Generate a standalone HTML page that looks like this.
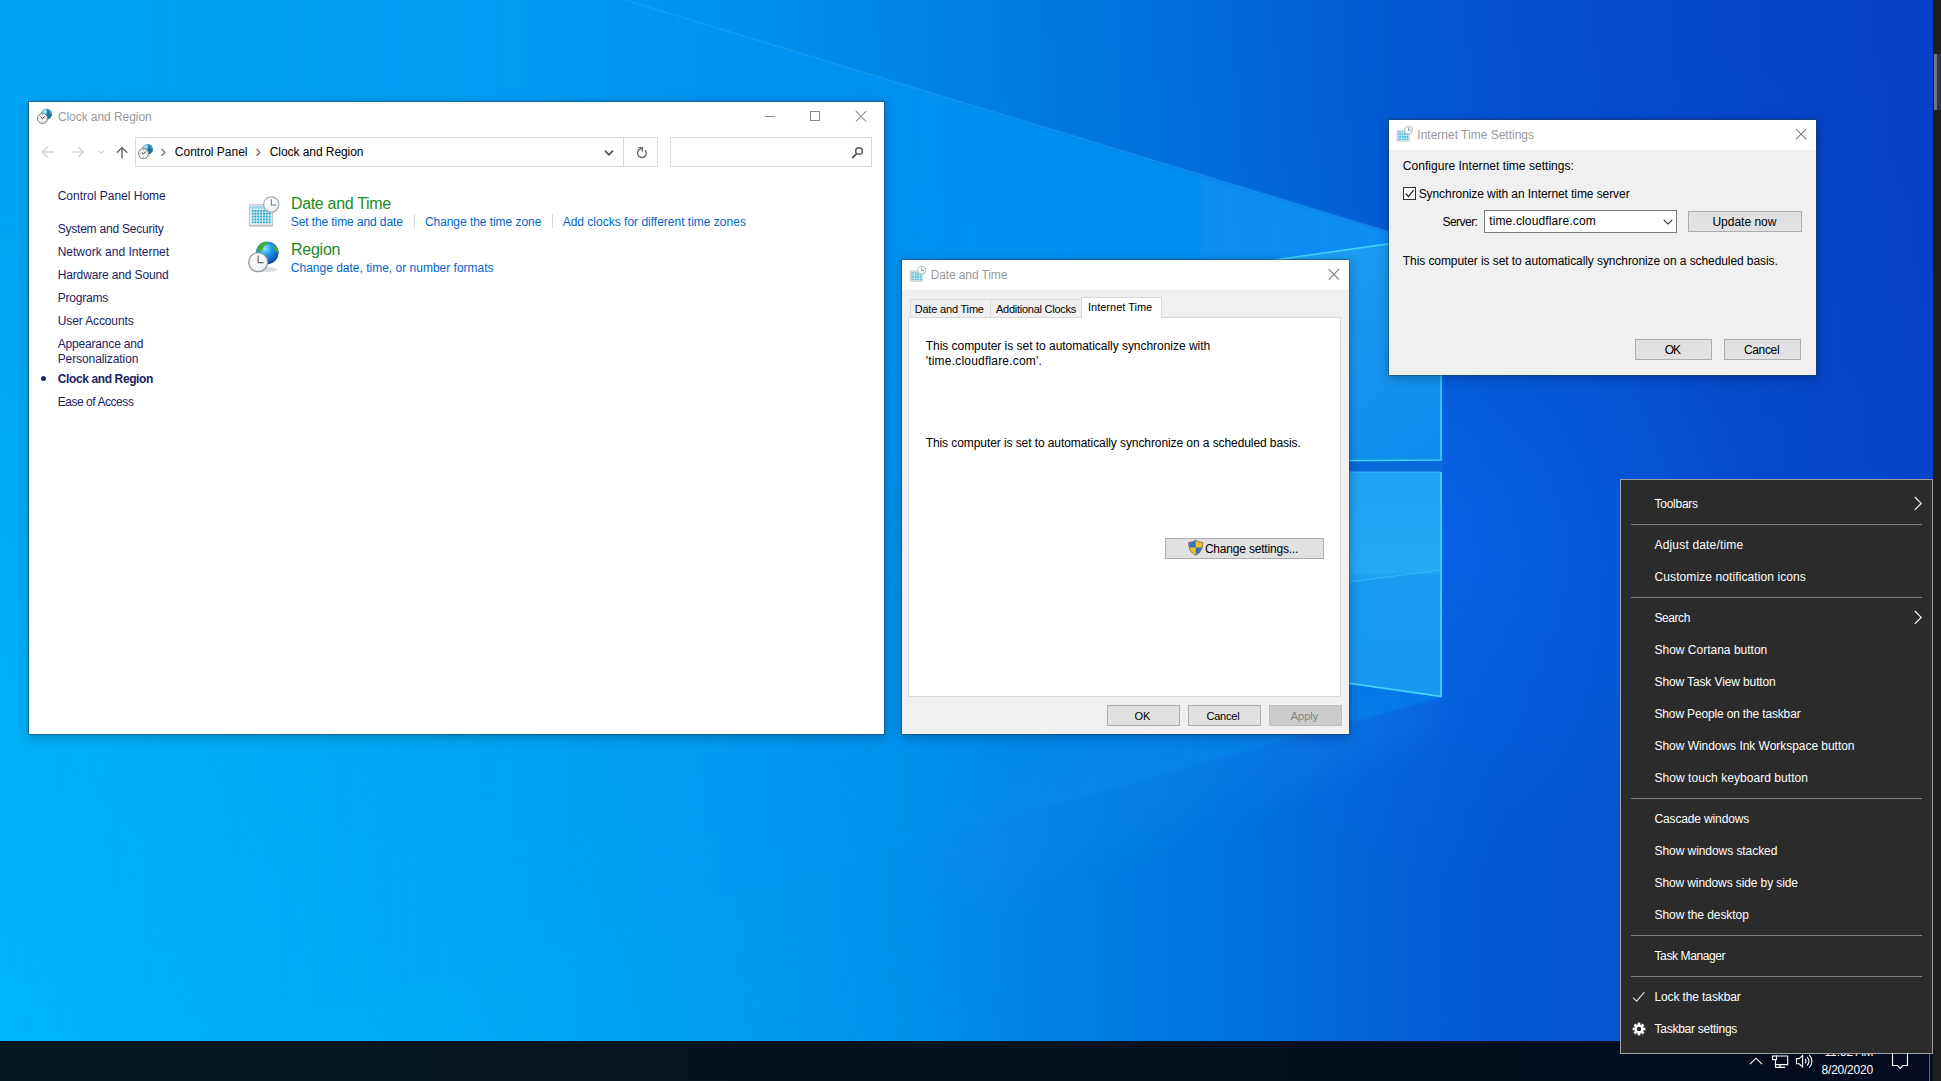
<!DOCTYPE html>
<html><head><meta charset="utf-8"><title>Desktop</title>
<style>
html,body{margin:0;padding:0;width:1941px;height:1081px;overflow:hidden;background:#0a58c8;font-family:"Liberation Sans",sans-serif;}
*{box-sizing:border-box}
.abs{position:absolute}
#txt .t{position:absolute;white-space:nowrap;font-family:"Liberation Sans",sans-serif;}
.win{position:absolute;background:#fff;box-shadow:0 0 0 1px rgba(40,60,80,.45),0 3px 11px 1px rgba(0,0,0,.22),0 0 4px rgba(0,0,0,.10);}
.dlg{background:#f0f0f0}
.btn{position:absolute;background:#e1e1e1;border:1px solid #adadad;}
.btn.dis{background:#cccccc;border-color:#bfbfbf}
.box{position:absolute;background:#fff;border:1px solid #d9d9d9}
.sep{position:absolute;height:1px;background:#808080;left:1631px;width:291px}
svg{position:absolute;overflow:visible}

</style></head><body>
<svg id="wp" width="1941" height="1081" viewBox="0 0 1941 1081" style="position:absolute;left:0;top:0">
<defs>
<linearGradient id="bg" x1="0" y1="0" x2="1" y2="0">
 <stop offset="0" stop-color="#00a5f2"/>
 <stop offset="0.26" stop-color="#009df0"/>
 <stop offset="0.46" stop-color="#008de9"/>
 <stop offset="0.62" stop-color="#0075e1"/>
 <stop offset="0.77" stop-color="#0558d4"/>
 <stop offset="1" stop-color="#0645c8"/>
</linearGradient>
<linearGradient id="beam" gradientUnits="userSpaceOnUse" x1="0" y1="0" x2="1441" y2="0">
 <stop offset="0" stop-color="#0498f6" stop-opacity="0"/>
 <stop offset="0.42" stop-color="#0496f6" stop-opacity="0.25"/>
 <stop offset="0.62" stop-color="#0494f6" stop-opacity="0.75"/>
 <stop offset="1" stop-color="#0a92f6" stop-opacity="0.92"/>
</linearGradient>
<linearGradient id="beam2" gradientUnits="userSpaceOnUse" x1="0" y1="0" x2="1441" y2="0">
 <stop offset="0" stop-color="#0498f6" stop-opacity="0"/>
 <stop offset="0.45" stop-color="#0496f6" stop-opacity="0.15"/>
 <stop offset="1" stop-color="#0a8cf2" stop-opacity="0.5"/>
</linearGradient>
<linearGradient id="bl" x1="0" y1="0" x2="0" y2="1">
 <stop offset="0" stop-color="#00b8fa" stop-opacity="0"/>
 <stop offset="0.55" stop-color="#00b8fa" stop-opacity="0.6"/>
 <stop offset="1" stop-color="#00b8fa" stop-opacity="0.85"/>
</linearGradient>
<linearGradient id="blm" x1="0" y1="0" x2="1" y2="0">
 <stop offset="0" stop-color="#fff" stop-opacity="1"/>
 <stop offset="0.55" stop-color="#fff" stop-opacity="0"/>
</linearGradient>
<mask id="blmask"><rect width="1941" height="1081" fill="url(#blm)"/></mask>
<radialGradient id="tr" cx="1" cy="0" r="0.7">
 <stop offset="0" stop-color="#0434bc" stop-opacity="0.3"/>
 <stop offset="1" stop-color="#0430b8" stop-opacity="0"/>
</radialGradient>
<radialGradient id="glow" cx="1441" cy="540" r="330" gradientUnits="userSpaceOnUse">
 <stop offset="0" stop-color="#0a6cf4" stop-opacity="0.5"/>
 <stop offset="1" stop-color="#0a6cf4" stop-opacity="0"/>
</radialGradient>
<linearGradient id="pane1" x1="0" y1="0" x2="1" y2="1">
 <stop offset="0" stop-color="#22a6f4"/><stop offset="1" stop-color="#0f8aec"/>
</linearGradient>
<linearGradient id="pane2" x1="0" y1="0" x2="0" y2="1">
 <stop offset="0" stop-color="#1a9ef2"/><stop offset="0.45" stop-color="#1ea6f4"/><stop offset="0.46" stop-color="#189cf0"/><stop offset="1" stop-color="#1698ee"/>
</linearGradient>
<filter id="b2"><feGaussianBlur stdDeviation="1.5"/></filter>
<filter id="b20"><feGaussianBlur stdDeviation="20"/></filter>
</defs>
<rect width="1941" height="1081" fill="url(#bg)"/>
<rect width="1941" height="1081" fill="url(#tr)"/>
<rect width="1941" height="1081" fill="url(#glow)"/>
<rect y="200" width="1941" height="881" fill="url(#bl)" mask="url(#blmask)"/>
<polygon points="-50,-20 625,0 1441,248 1441,466 -50,520" fill="url(#beam)" filter="url(#b2)"/>
<polygon points="-50,520 1441,466 1441,697 408,985 -50,1120" fill="url(#beam2)" filter="url(#b2)"/>
<path d="M625,0 L1441,248" stroke="#3db4ff" stroke-opacity="0.3" stroke-width="1.5" fill="none"/>
<!-- floor reflection under logo -->
<polygon points="1100,735 1441,697 1441,720 1300,780 1000,900 900,860" fill="#1c8cf0" opacity="0.25" filter="url(#b20)"/>
<!-- logo panes -->
<polygon points="1180,461 1443,459 1443,473 1180,473" fill="#0868dc"/>
<polygon points="1180,273.3 1441,236.5 1441,460 1180,462" fill="url(#pane1)"/>
<polygon points="1180,472 1441,472 1441,696.5 1180,659" fill="url(#pane2)"/>
<polygon points="1180,472 1441,472 1441,570 1180,604" fill="#2aaef8" opacity="0.3"/>
<path d="M1180,604 L1441,570" stroke="#48c8fa" stroke-opacity="0.55" stroke-width="1.2" fill="none"/>
<polyline points="1180,273.3 1441,236.5 1441,460 1180,462" fill="none" stroke="#40d2f8" stroke-width="1.6"/>
<polyline points="1180,472 1441,472" fill="none" stroke="#40d2f8" stroke-width="1" stroke-opacity="0.6"/>
<polyline points="1441,472 1441,696.5 1180,659" fill="none" stroke="#40d2f8" stroke-width="1.8"/>
</svg>

<!-- right strip -->
<div class="abs" style="left:1933px;top:0;width:8px;height:1081px;background:#1e1e1e"></div>
<div class="abs" style="left:1934px;top:54px;width:7px;height:56px;background:#34344c"></div>
<div class="abs" style="left:1934px;top:54px;width:3px;height:56px;background:#77757c"></div>

<!-- taskbar -->
<div class="abs" style="left:0;top:1041px;width:1933px;height:40px;background:linear-gradient(90deg,#021823 0%,#03131f 50%,#050b20 100%)"></div>

<span class="abs" style="left:1824.4px;top:1044px;font-size:12px;line-height:16px;color:#fff;white-space:nowrap;letter-spacing:-0.1px">11:52 AM</span>
<!-- ============ Window 1 ============ -->
<div class="win" style="left:29px;top:102px;width:855px;height:632px"></div>
<div class="box" style="left:135px;top:137px;width:489px;height:30px"></div>
<div class="box" style="left:623px;top:137px;width:35px;height:30px"></div>
<div class="box" style="left:670px;top:137px;width:202px;height:30px"></div>
<div class="abs" style="left:414px;top:214px;width:1px;height:14px;background:#d6d6d6"></div>
<div class="abs" style="left:552px;top:214px;width:1px;height:14px;background:#d6d6d6"></div>
<div class="abs" style="left:41px;top:376px;width:5px;height:5px;border-radius:50%;background:#1e2a6a"></div>

<!-- ============ Window 2 ============ -->
<div class="win" style="left:902px;top:260px;width:447px;height:474px"></div>
<div class="abs dlg" style="left:902px;top:290px;width:447px;height:444px"></div>
<div class="box" style="left:908px;top:317px;width:433px;height:380px"></div>
<div class="abs" style="left:910px;top:299px;width:81px;height:19px;background:#f0f0f0;border:1px solid #d9d9d9;border-bottom:none"></div>
<div class="abs" style="left:991px;top:299px;width:91px;height:19px;background:#f0f0f0;border:1px solid #d9d9d9;border-bottom:none;border-left:none"></div>
<div class="abs" style="left:1081px;top:297px;width:81px;height:21px;background:#fff;border:1px solid #d9d9d9;border-bottom:none"></div>
<div class="abs" style="left:910px;top:317px;width:171px;height:1px;background:#d9d9d9"></div>
<div class="btn" style="left:1165px;top:538px;width:159px;height:21px"></div>
<div class="btn" style="left:1107px;top:705px;width:73px;height:21px"></div>
<div class="btn" style="left:1188px;top:705px;width:73px;height:21px"></div>
<div class="btn dis" style="left:1269px;top:705px;width:73px;height:21px"></div>

<!-- ============ Window 3 ============ -->
<div class="win" style="left:1389px;top:120px;width:427px;height:255px"></div>
<div class="abs dlg" style="left:1389px;top:150px;width:427px;height:225px"></div>
<div class="abs" style="left:1403px;top:187px;width:13px;height:13px;background:#fff;border:1px solid #333"></div>
<div class="abs" style="left:1484px;top:210px;width:193px;height:23px;background:#fff;border:1px solid #7a7a7a"></div>
<div class="btn" style="left:1688px;top:211px;width:114px;height:21px"></div>
<div class="btn" style="left:1635px;top:339px;width:77px;height:21px"></div>
<div class="btn" style="left:1724px;top:339px;width:77px;height:21px"></div>

<!-- ============ Context menu ============ -->
<div class="abs" style="left:1620px;top:479px;width:313px;height:575px;background:#2b2b2b;border:1px solid #a0a0a0"></div>
<div class="sep" style="top:524px"></div>
<div class="sep" style="top:597px"></div>
<div class="sep" style="top:798px"></div>
<div class="sep" style="top:935px"></div>
<div class="sep" style="top:976px"></div>
<!--ICONS_START--><svg width="1941" height="1081" viewBox="0 0 1941 1081" style="left:0;top:0">
<defs>
<radialGradient id="gl" cx="0.35" cy="0.3" r="0.8"><stop offset="0" stop-color="#bfe9f6"/><stop offset="0.45" stop-color="#58b4d8"/><stop offset="1" stop-color="#1b6a98"/></radialGradient>
<radialGradient id="gl2" cx="0.4" cy="0.3" r="0.75"><stop offset="0" stop-color="#8fe6ff"/><stop offset="0.4" stop-color="#1f9de8"/><stop offset="1" stop-color="#0a3aa0"/></radialGradient>
<radialGradient id="ck" cx="0.4" cy="0.35" r="0.8"><stop offset="0" stop-color="#ffffff"/><stop offset="0.7" stop-color="#eef1f4"/><stop offset="1" stop-color="#c8ced4"/></radialGradient>
<linearGradient id="cal" x1="0" y1="0" x2="0" y2="1"><stop offset="0" stop-color="#d8eef6"/><stop offset="1" stop-color="#ffffff"/></linearGradient>
<pattern id="grid" width="2.85" height="2.9" patternUnits="userSpaceOnUse" x="251.6" y="209.8"><rect width="2" height="2" fill="#1fa0ca"/></pattern>
<pattern id="gridS" width="2.45" height="2.5" patternUnits="userSpaceOnUse"><rect width="2.45" height="2.5" fill="#bfe4ee"/><rect width="1.5" height="1.5" fill="#3fb4d4"/></pattern>
<g id="glclk16">
  <circle cx="9.4" cy="5.4" r="5.5" fill="url(#gl)"/>
  <path d="M9.6,0.2 C10.4,2 10.2,4 9.2,5.6 C10.4,6.8 10.6,8.8 9.8,10.6 C12.8,10.4 15,8 14.9,5.2 C14.4,5.8 13.6,6 13,5.6 C13.2,3.6 12,1.2 9.600,0.2 Z" fill="#1f6f9f" opacity="0.9"/>
  <circle cx="5.5" cy="9.9" r="5" fill="url(#ck)" stroke="#7d7d7d" stroke-width="1"/>
  <path d="M3.7,8.5 L5.5,10.1 L7.8,7.900" fill="none" stroke="#222" stroke-width="1"/>
  <path d="M5.5,6 V6.8 M5.5,13 V13.8 M1.600,9.9 H2.4 M8.600,9.9 H9.4" stroke="#777" stroke-width="0.7"/>
</g>
<g id="calclk16">
  <rect x="0.2" y="4.6" width="12.4" height="10.6" fill="#dfe3e6" stroke="#b9bfc4" stroke-width="0.5"/>
  <rect x="0.9" y="5.6" width="11" height="8.6" fill="url(#gridS)"/>
  <circle cx="11.7" cy="4.2" r="4" fill="url(#ck)" stroke="#aab2b8" stroke-width="0.8"/>
  <path d="M11.7,1.6 V4.3 H14" fill="none" stroke="#6a7f90" stroke-width="0.8"/>
</g>
<g id="xbtn"><path d="M0,0 L10.4,10.4 M10.4,0 L0,10.4" stroke-width="1.05" fill="none"/></g>
</defs>

<!-- window 1 title icon + address icon -->
<use href="#glclk16" x="37" y="108.6"/>
<use href="#glclk16" x="138" y="143.8"/>
<!-- caption buttons win1 -->
<g stroke="#8a8a8a" fill="none" stroke-width="1">
 <path d="M765,116.5 H775"/>
 <rect x="810.5" y="111.5" width="9" height="9"/>
</g>
<use href="#xbtn" x="855.8" y="111.1" stroke="#8a8a8a"/>
<use href="#xbtn" x="1328.7" y="269.2" stroke="#777"/>
<use href="#xbtn" x="1795.9" y="129" stroke="#777"/>
<!-- nav arrows -->
<g fill="none" stroke="#d2d2d2" stroke-width="1.4">
 <path d="M54,152 H42.8 M47.8,146.8 L42.6,152 L47.8,157.2"/>
 <path d="M72,152 H83.2 M78.2,146.8 L83.4,152 L78.2,157.2"/>
 <path d="M98.4,150.6 L101.2,153.2 L104,150.6" stroke-width="1.1"/>
</g>
<path d="M122,158.6 V147.6 M116.8,152.8 L122,147.6 L127.2,152.8" fill="none" stroke="#6e6e6e" stroke-width="1.5"/>
<g fill="none" stroke="#6a6a6a" stroke-width="1.25">
 <path d="M161.6,149 L164.9,152.4 L161.6,155.8"/>
 <path d="M256.6,149 L259.9,152.4 L256.6,155.8"/>
</g>
<path d="M605,150.6 L609,154.8 L613,150.6" fill="none" stroke="#505050" stroke-width="1.7"/>
<!-- refresh -->
<g fill="none" stroke="#6a6a6a" stroke-width="1.4">
 <path d="M645.1,150.3 A4.3,4.3 0 1 1 639.1,149.9 L641.8,147.9"/>
 <path d="M638.2,147.6 H642.4 V151.7" stroke-width="1.3"/>
</g>
<!-- magnifier -->
<g fill="none" stroke="#5a5a5a">
 <circle cx="859" cy="151" r="3.3" stroke-width="1.5"/>
 <path d="M856.6,153.6 L852.2,158" stroke-width="1.9"/>
</g>

<!-- 32px Date and Time icon -->
<g>
 <rect x="249.3" y="204.8" width="23.4" height="20.8" fill="#e4e7ea" stroke="#aeb6bc" stroke-width="0.8"/>
 <rect x="250.6" y="206.2" width="20.8" height="17.8" fill="url(#cal)"/>
 <rect x="250.6" y="206.200" width="20.8" height="2.6" fill="#9fd6e8"/>
 <rect x="251.6" y="209.8" width="19.6" height="14" fill="url(#grid)"/>
 <rect x="249.6" y="225.6" width="23" height="1.2" fill="#c9ced2"/>
 <circle cx="271.3" cy="204.6" r="7.7" fill="url(#ck)" stroke="#a2abb3" stroke-width="1.2"/>
 <path d="M271.3,199.2 V205 H276.2" fill="none" stroke="#5c7488" stroke-width="1.1"/>
</g>
<!-- 32px Region icon -->
<g>
 <ellipse cx="266" cy="269.6" rx="11.5" ry="2.6" fill="#000" opacity="0.13"/>
 <circle cx="267.2" cy="252.8" r="11.4" fill="url(#gl2)"/>
 <path d="M258.8,245.7 C260.8,242.2 265.8,241.2 268.8,242.8 C267.8,245.2 263.3,245.6 262.8,248.8 C262.4,251.2 259.2,250.2 258,252.8 C256.8,250.2 257.2,247.6 258.8,245.700 Z" fill="#3fae3c"/>
 <path d="M273.4,245.6 C275.8,245.8 277.8,248.8 278.4,252 C276.8,253.2 274.4,251.2 273.8,248.8 Z" fill="#3fae3c"/>
 <circle cx="258.2" cy="262.2" r="9.5" fill="url(#ck)" stroke="#949ca4" stroke-width="1.3"/>
 <path d="M258.2,255.6 V262.6 H263.6" fill="none" stroke="#606870" stroke-width="1.2"/>
</g>

<!-- window 2 / 3 title icons -->
<use href="#calclk16" x="910" y="266.2"/>
<use href="#calclk16" x="1396.8" y="126"/>

<!-- shield -->
<g>
 <path d="M1195.7,540.2 C1193.4,541.6 1191.2,542.2 1188.7,542.3 C1188.5,548.3 1190.5,552.9 1195.7,555.2 C1200.9,552.9 1202.9,548.3 1202.7,542.3 C1200.2,542.2 1198,541.6 1195.7,540.2 Z" fill="#f5c01a" stroke="#555" stroke-width="0.7"/>
 <path d="M1195.7,540.6 C1193.6,541.9 1191.5,542.5 1189.1,542.6 C1189.05,544.4 1189.2,546.1 1189.6,547.6 H1195.7 Z" fill="#2f72c8"/>
 <path d="M1195.7,547.6 H1201.8 C1201,550.9 1199.2,553.3 1195.7,554.8 Z" fill="#2f72c8"/>
</g>

<!-- checkbox check -->
<path d="M1405.6,193.6 L1408.4,196.6 L1413.6,190.2" fill="none" stroke="#222" stroke-width="1.3"/>
<!-- combo chevron -->
<path d="M1663.8,220 L1668,224 L1672.2,220" fill="none" stroke="#444" stroke-width="1.1"/>

<!-- menu arrows -->
<g fill="none" stroke="#fff" stroke-width="1.1">
 <path d="M1914.8,497 L1921.2,503.400 L1914.8,509.8"/>
 <path d="M1914.8,611 L1921.2,617.400 L1914.8,623.8"/>
 <path d="M1633,997.6 L1636.6,1001.2 L1644.4,992.2" stroke="#e0e0e0"/>
</g>
<!-- gear -->
<g transform="translate(1639,1029)">
 <g fill="#fff">
  <rect x="-1.3" y="-6.4" width="2.6" height="12.8"/>
  <rect x="-1.3" y="-6.4" width="2.6" height="12.8" transform="rotate(45)"/>
  <rect x="-1.3" y="-6.4" width="2.6" height="12.8" transform="rotate(90)"/>
  <rect x="-1.3" y="-6.4" width="2.6" height="12.8" transform="rotate(135)"/>
  <circle r="4.6"/>
 </g>
 <circle r="2.2" fill="#2b2b2b"/>
</g>

<!-- tray -->
<g fill="none" stroke="#fff" stroke-width="1.1">
 <path d="M1750,1064.200 L1756,1058.2 L1762,1064.200"/>
 <!-- network -->
 <path d="M1775.5,1056 H1787.7 V1064.600 H1775.500 M1775.5,1059 V1067.6 M1775.5,1067.4 H1785 M1780,1064.600 V1067.4"/>
 <rect x="1772.5" y="1056" width="4" height="3.600" fill="#04121f"/>
 <!-- volume -->
 <path d="M1796.5,1058.6 H1799.2 L1802.6,1055.4 V1067 L1799.200,1063.800 H1796.5 Z"/>
 <path d="M1805,1059 A3,3 0 0 1 1805,1063.4"/>
 <path d="M1807,1056.8 A6,6 0 0 1 1807,1065.600"/>
 <path d="M1809.2,1054.8 A9,9 0 0 1 1809.200,1067.600"/>
 <!-- notification -->
 <path d="M1892.5,1053 V1065.500 H1897.5 L1900.200,1068.4 L1903,1065.500 H1907.500 V1053"/>
</g>
<rect x="1929" y="1054" width="1" height="27" fill="#5a6070"/>
</svg>
<!--ICONS_END-->

<div id="txt">
<span class="t" style="left:57.90px;top:108.50px;font-size:12px;line-height:17px;color:#999;letter-spacing:-0.060px;">Clock and Region</span>
<span class="t" style="left:174.80px;top:143.50px;font-size:12px;line-height:17px;color:#000;">Control Panel</span>
<span class="t" style="left:269.70px;top:143.50px;font-size:12px;line-height:17px;color:#000;letter-spacing:-0.060px;">Clock and Region</span>
<span class="t" style="left:57.70px;top:187.50px;font-size:12px;line-height:17px;color:#1b2262;">Control Panel Home</span>
<span class="t" style="left:57.70px;top:220.50px;font-size:12px;line-height:17px;color:#1b2262;letter-spacing:-0.215px;">System and Security</span>
<span class="t" style="left:57.70px;top:243.50px;font-size:12px;line-height:17px;color:#1b2262;">Network and Internet</span>
<span class="t" style="left:57.70px;top:266.50px;font-size:12px;line-height:17px;color:#1b2262;letter-spacing:-0.138px;">Hardware and Sound</span>
<span class="t" style="left:57.70px;top:289.50px;font-size:12px;line-height:17px;color:#1b2262;letter-spacing:-0.193px;">Programs</span>
<span class="t" style="left:57.70px;top:312.50px;font-size:12px;line-height:17px;color:#1b2262;letter-spacing:-0.113px;">User Accounts</span>
<span class="t" style="left:57.70px;top:335.50px;font-size:12px;line-height:17px;color:#1b2262;letter-spacing:-0.173px;">Appearance and</span>
<span class="t" style="left:57.70px;top:350.50px;font-size:12px;line-height:17px;color:#1b2262;letter-spacing:-0.096px;">Personalization</span>
<span class="t" style="left:57.70px;top:370.50px;font-size:12px;line-height:17px;color:#1b2262;font-weight:bold;letter-spacing:-0.378px;">Clock and Region</span>
<span class="t" style="left:57.70px;top:393.50px;font-size:12px;line-height:17px;color:#1b2262;letter-spacing:-0.450px;">Ease of Access</span>
<span class="t" style="left:290.90px;top:192.50px;font-size:16px;line-height:22px;color:#1e8a1e;letter-spacing:-0.307px;">Date and Time</span>
<span class="t" style="left:290.80px;top:213.50px;font-size:12px;line-height:17px;color:#0066cc;letter-spacing:-0.099px;">Set the time and date</span>
<span class="t" style="left:424.90px;top:213.50px;font-size:12px;line-height:17px;color:#0066cc;letter-spacing:-0.052px;">Change the time zone</span>
<span class="t" style="left:562.70px;top:213.50px;font-size:12px;line-height:17px;color:#0066cc;">Add clocks for different time zones</span>
<span class="t" style="left:290.90px;top:238.50px;font-size:16px;line-height:22px;color:#1e8a1e;letter-spacing:-0.216px;">Region</span>
<span class="t" style="left:290.80px;top:259.50px;font-size:12px;line-height:17px;color:#0066cc;">Change date, time, or number formats</span>
<span class="t" style="left:930.70px;top:266.50px;font-size:12px;line-height:17px;color:#999;letter-spacing:-0.113px;">Date and Time</span>
<span class="t" style="left:914.70px;top:301.50px;font-size:11px;line-height:15px;color:#000;letter-spacing:-0.188px;">Date and Time</span>
<span class="t" style="left:996.00px;top:301.50px;font-size:11px;line-height:15px;color:#000;letter-spacing:-0.253px;">Additional Clocks</span>
<span class="t" style="left:1088.00px;top:299.50px;font-size:11px;line-height:15px;color:#000;">Internet Time</span>
<span class="t" style="left:925.70px;top:337.50px;font-size:12px;line-height:17px;color:#000;letter-spacing:-0.031px;">This computer is set to automatically synchronize with</span>
<span class="t" style="left:925.70px;top:352.50px;font-size:12px;line-height:17px;color:#000;letter-spacing:0.201px;">'time.cloudflare.com'.</span>
<span class="t" style="left:925.70px;top:434.50px;font-size:12px;line-height:17px;color:#000;letter-spacing:-0.082px;">This computer is set to automatically synchronize on a scheduled basis.</span>
<span class="t" style="left:1204.90px;top:540.80px;font-size:12px;line-height:17px;color:#000;letter-spacing:-0.191px;">Change settings...</span>
<span class="t" style="left:1134.40px;top:708.50px;font-size:11px;line-height:15px;color:#000;">OK</span>
<span class="t" style="left:1206.40px;top:708.50px;font-size:11px;line-height:15px;color:#000;letter-spacing:-0.180px;">Cancel</span>
<span class="t" style="left:1290.70px;top:708.50px;font-size:11px;line-height:15px;color:#838383;">Apply</span>
<span class="t" style="left:1417.30px;top:126.50px;font-size:12px;line-height:17px;color:#999;">Internet Time Settings</span>
<span class="t" style="left:1402.80px;top:157.50px;font-size:12px;line-height:17px;color:#000;letter-spacing:0.031px;">Configure Internet time settings:</span>
<span class="t" style="left:1418.70px;top:185.50px;font-size:12px;line-height:17px;color:#000;letter-spacing:-0.081px;">Synchronize with an Internet time server</span>
<span class="t" style="left:1442.50px;top:213.50px;font-size:12px;line-height:17px;color:#000;letter-spacing:-0.540px;">Server:</span>
<span class="t" style="left:1489.20px;top:212.50px;font-size:12px;line-height:17px;color:#000;letter-spacing:0.140px;">time.cloudflare.com</span>
<span class="t" style="left:1712.40px;top:213.50px;font-size:12px;line-height:17px;color:#000;">Update now</span>
<span class="t" style="left:1402.80px;top:252.50px;font-size:12px;line-height:17px;color:#000;letter-spacing:-0.084px;">This computer is set to automatically synchronize on a scheduled basis.</span>
<span class="t" style="left:1664.70px;top:341.50px;font-size:12px;line-height:17px;color:#000;letter-spacing:-1.000px;">OK</span>
<span class="t" style="left:1744.00px;top:341.50px;font-size:12px;line-height:17px;color:#000;letter-spacing:-0.360px;">Cancel</span>
<span class="t" style="left:1654.50px;top:495.50px;font-size:12px;line-height:17px;color:#fff;letter-spacing:-0.257px;">Toolbars</span>
<span class="t" style="left:1654.50px;top:536.50px;font-size:12px;line-height:17px;color:#fff;letter-spacing:0.174px;">Adjust date/time</span>
<span class="t" style="left:1654.50px;top:568.50px;font-size:12px;line-height:17px;color:#fff;letter-spacing:0.097px;">Customize notification icons</span>
<span class="t" style="left:1654.50px;top:609.50px;font-size:12px;line-height:17px;color:#fff;letter-spacing:-0.432px;">Search</span>
<span class="t" style="left:1654.50px;top:641.50px;font-size:12px;line-height:17px;color:#fff;">Show Cortana button</span>
<span class="t" style="left:1654.50px;top:673.50px;font-size:12px;line-height:17px;color:#fff;letter-spacing:-0.117px;">Show Task View button</span>
<span class="t" style="left:1654.50px;top:705.50px;font-size:12px;line-height:17px;color:#fff;letter-spacing:-0.158px;">Show People on the taskbar</span>
<span class="t" style="left:1654.50px;top:737.50px;font-size:12px;line-height:17px;color:#fff;letter-spacing:-0.037px;">Show Windows Ink Workspace button</span>
<span class="t" style="left:1654.50px;top:769.50px;font-size:12px;line-height:17px;color:#fff;letter-spacing:0.054px;">Show touch keyboard button</span>
<span class="t" style="left:1654.50px;top:810.50px;font-size:12px;line-height:17px;color:#fff;letter-spacing:-0.141px;">Cascade windows</span>
<span class="t" style="left:1654.50px;top:842.50px;font-size:12px;line-height:17px;color:#fff;letter-spacing:-0.062px;">Show windows stacked</span>
<span class="t" style="left:1654.50px;top:874.50px;font-size:12px;line-height:17px;color:#fff;letter-spacing:-0.109px;">Show windows side by side</span>
<span class="t" style="left:1654.50px;top:906.50px;font-size:12px;line-height:17px;color:#fff;letter-spacing:-0.072px;">Show the desktop</span>
<span class="t" style="left:1654.50px;top:947.50px;font-size:12px;line-height:17px;color:#fff;letter-spacing:-0.393px;">Task Manager</span>
<span class="t" style="left:1654.50px;top:988.50px;font-size:12px;line-height:17px;color:#fff;letter-spacing:-0.120px;">Lock the taskbar</span>
<span class="t" style="left:1654.50px;top:1020.50px;font-size:12px;line-height:17px;color:#fff;letter-spacing:-0.258px;">Taskbar settings</span>
<span class="t" style="left:1821.60px;top:1061.50px;font-size:12px;line-height:17px;color:#fff;letter-spacing:-0.236px;">8/20/2020</span>
</div>
</body></html>
